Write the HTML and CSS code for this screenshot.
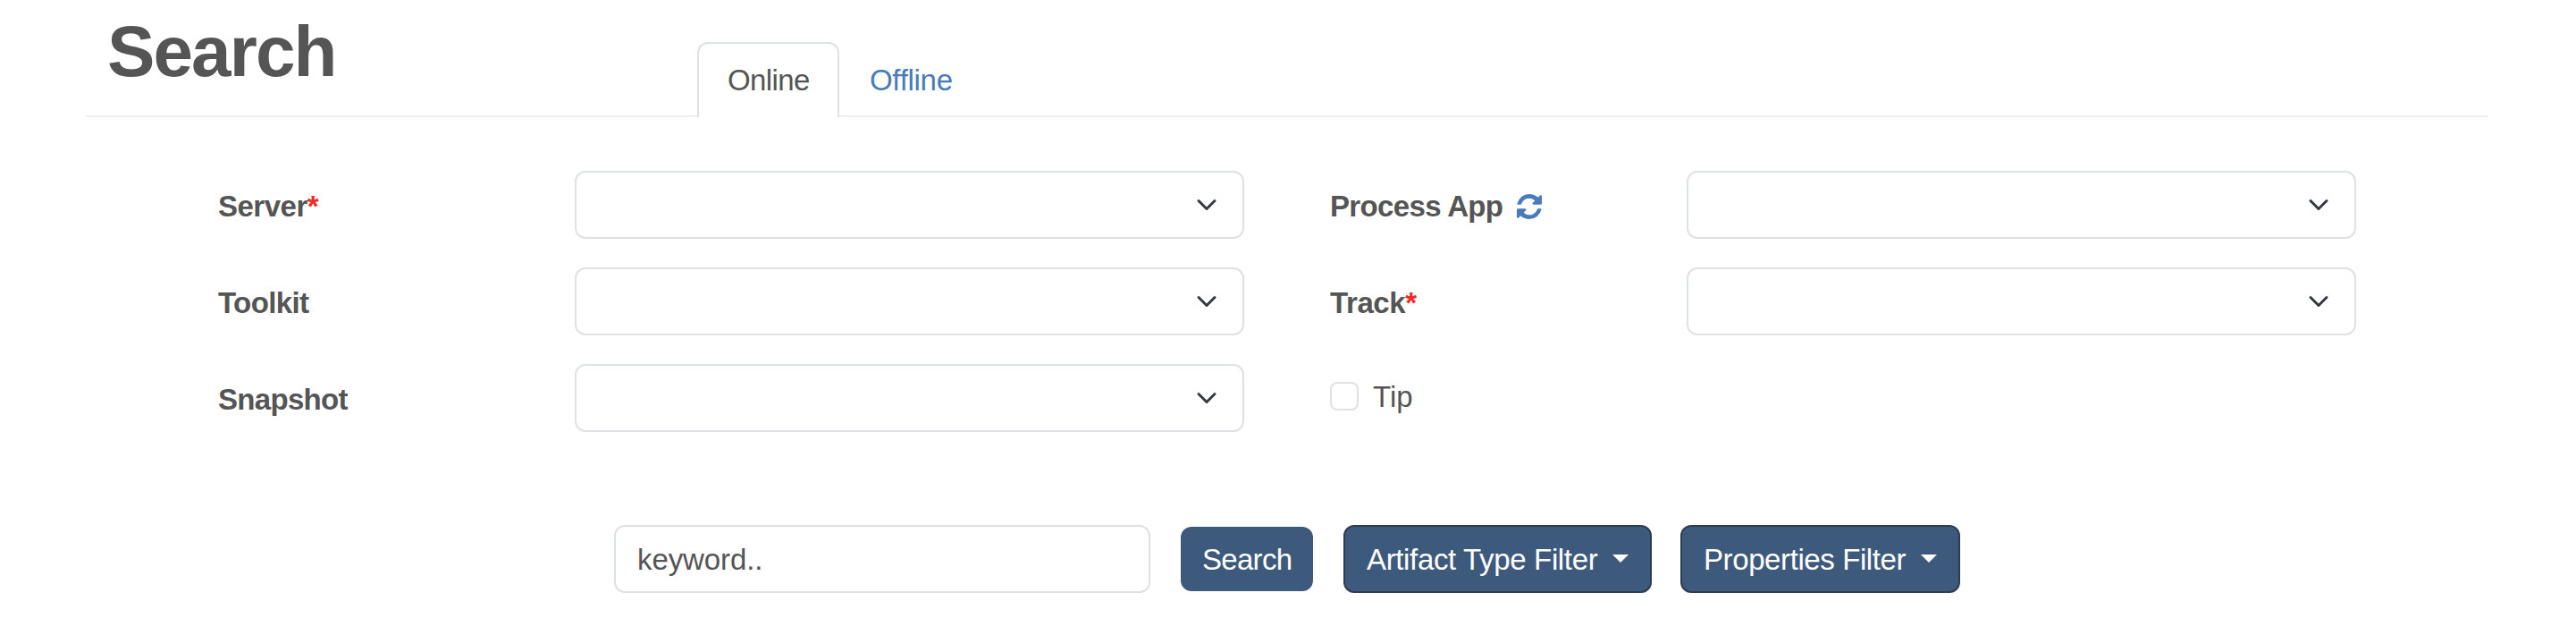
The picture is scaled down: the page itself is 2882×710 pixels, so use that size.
FILE: index.html
```html
<!DOCTYPE html>
<html lang="en">
<head>
<meta charset="utf-8">
<title>Search</title>
<link rel="stylesheet" href="styles.css">
</head>
<body>
<svg class="sprite" width="0" height="0" aria-hidden="true">
  <symbol id="chevron" viewBox="0 0 16 16"><path d="m2 5 6 6 6-6" fill="none" stroke="#343a40" stroke-width="2" stroke-linecap="round" stroke-linejoin="round"/></symbol>
</svg>
<header class="header">
  <h1 class="title">Search</h1>
  <nav class="tabs">
    <a class="tab tab-active">Online</a>
    <a class="tab tab-offline">Offline</a>
  </nav>
</header>
<main>
  <form class="fields">
    <label class="label"><span class="server">Server</span><span class="required">*</span></label>
    <div class="select"><svg class="chevron"><use href="#chevron"/></svg></div>
    <label class="label"><span class="process">Process App</span>
      <svg class="refresh" viewBox="0 0 1536 1536"><path fill="#477bb9" d="M1511 928q0 5-1 7-64 268-268 434.500t-478 166.500q-146 0-282.500-55t-243.500-157l-129 129q-19 19-45 19t-45-19-19-45v-448q0-26 19-45t45-19h448q26 0 45 19t19 45-19 45l-137 137q71 66 161 102t187 36q134 0 250-65t186-179q11-17 53-117 8-23 30-23h192q13 0 22.500 9.500t9.500 22.500zm25-800v448q0 26-19 45t-45 19h-448q-26 0-45-19t-19-45 19-45l138-138q-148-137-349-137-134 0-250 65t-186 179q-11 17-53 117-8 23-30 23h-199q-13 0-22.500-9.500t-9.500-22.500v-7q65-268 270-434.500t480-166.500q146 0 284 55.500t245 156.500l130-129q19-19 45-19t45 19 19 45z"/></svg>
    </label>
    <div class="select"><svg class="chevron"><use href="#chevron"/></svg></div>
    <label class="label"><span class="toolkit">Toolkit</span></label>
    <div class="select"><svg class="chevron"><use href="#chevron"/></svg></div>
    <label class="label"><span class="track">Track</span><span class="required">*</span></label>
    <div class="select"><svg class="chevron"><use href="#chevron"/></svg></div>
    <label class="label"><span class="snapshot">Snapshot</span></label>
    <div class="select"><svg class="chevron"><use href="#chevron"/></svg></div>
    <label class="check"><span class="box"></span><span class="tip">Tip</span></label>
  </form>
  <div class="actions">
    <div class="keyword"><span>keyword..</span></div>
    <button class="btn btn-search"><span>Search</span></button>
    <button class="btn btn-filter btn-artifact"><span>Artifact Type Filter</span><i class="caret"></i></button>
    <button class="btn btn-filter btn-properties"><span>Properties Filter</span><i class="caret"></i></button>
  </div>
</main>
</body>
</html>
```
FILE: styles.css
```css
* { box-sizing: border-box; }
body {
  margin: 0;
  background: #fff;
  color: #555;
  font: 33px/48px "Liberation Sans", Arial, sans-serif;
}
.sprite { display: block; }
.header {
  display: flex;
  align-items: flex-start;
  width: 2688px;
  height: 131px;
  margin-left: 96px;
  border-bottom: 2px solid #eee;
}
.title {
  width: 660px;
  margin: 10px 0 0 24px;
  font-size: 80px;
  line-height: 96px;
  letter-spacing: -1.9px;
}
.tabs { display: flex; margin-top: 47px; }
.tab {
  height: 84px;
  padding: 17px 32px 0;
  border: 2px solid transparent;
  border-bottom: 0;
  border-radius: 12px 12px 0 0;
}
.tab-active {
  width: 159px;
  background: #fff;
  border-color: #dee2e6;
  letter-spacing: -0.6px;
}
.tab-offline { color: #477bb9; letter-spacing: -0.3px; }
.fields {
  display: grid;
  grid-template-columns: 399px 749px 495px 749px;
  row-gap: 32px;
  grid-auto-rows: 76px;
  justify-content: start;
  margin: 60px 0 0 244px;
}
.fields > :nth-child(4n + 3) { padding-left: 96px; }
.label {
  display: flex;
  align-items: center;
  padding-top: 3px;
  font-weight: bold;
}
.required { color: #ee2b24; }
.server { letter-spacing: -0.5px; }
.toolkit { letter-spacing: -0.6px; }
.snapshot { letter-spacing: -0.7px; }
.process { letter-spacing: -0.65px; }
.track { letter-spacing: -0.4px; }
.refresh { width: 28px; height: 28px; margin-left: 16px; }
.select {
  display: flex;
  align-items: center;
  justify-content: flex-end;
  padding-right: 28px;
  border: 2px solid #dee2e6;
  border-radius: 12px;
}
.chevron { width: 24px; height: 24px; }
.check { display: flex; align-items: flex-start; padding-top: 20px; }
.box {
  width: 32px;
  height: 32px;
  border: 2px solid #dee2e6;
  border-radius: 8px;
}
.tip { margin: -7px 0 0 16px; }
.actions {
  display: flex;
  height: 76px;
  margin: 104px 0 0 687px;
}
.keyword {
  width: 600px;
  padding: 13px 24px;
  border: 2px solid #dee2e6;
  border-radius: 12px;
  letter-spacing: -0.1px;
}
.btn {
  display: flex;
  align-items: center;
  height: 76px;
  padding: 1px 0 0 24px;
  border: 2px solid #2c3e50;
  border-radius: 12px;
  background: #3d5a7d;
  color: #fff;
  font: inherit;
  white-space: nowrap;
}
.btn-search {
  width: 148px;
  height: 72px;
  margin: 2px 34px 0;
  border: 0;
  letter-spacing: -0.7px;
}
.btn-artifact { width: 345px; margin-right: 32px; letter-spacing: -0.35px; }
.btn-properties { width: 313px; letter-spacing: -0.4px; }
.caret {
  margin: -3px 0 0 17px;
  border: 9px solid transparent;
  border-top-color: #fff;
  border-bottom: 0;
}
```
